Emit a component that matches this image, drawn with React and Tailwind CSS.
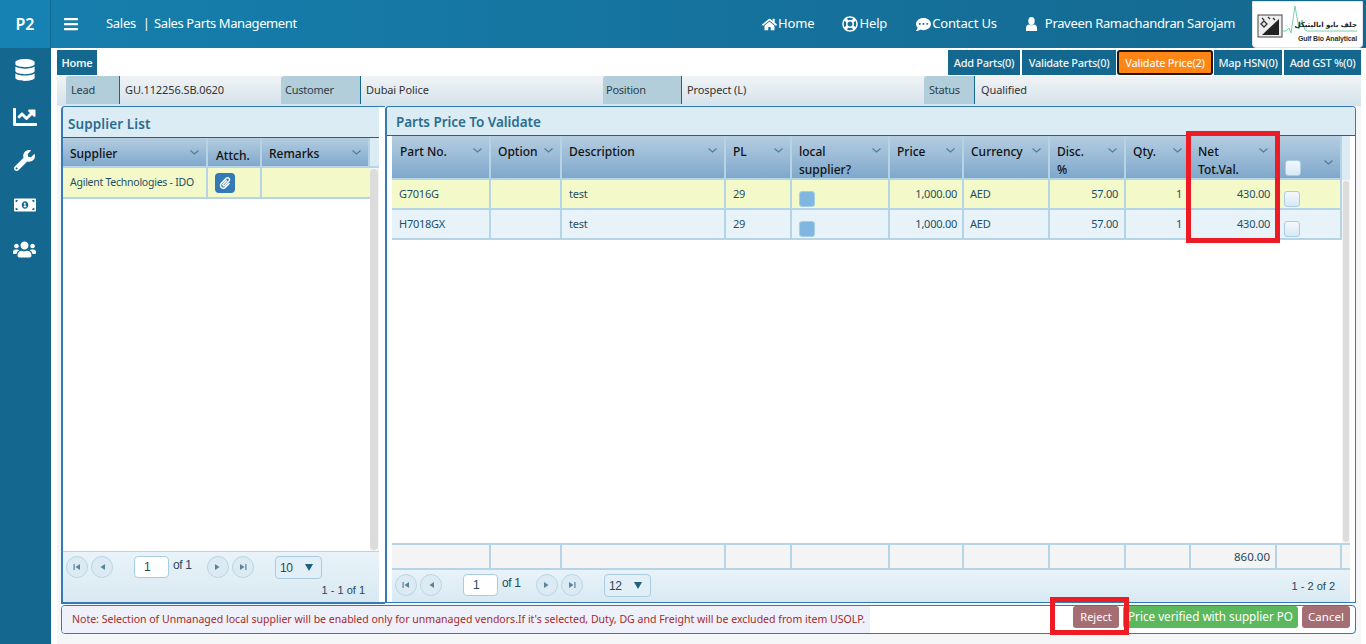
import React from "react";
import { FaDatabase, FaChartLine, FaWrench, FaMoneyBillAlt, FaUsers, FaHome, FaRegLifeRing, FaCommentDots, FaBars, FaPaperclip } from "react-icons/fa";

const Caret = ({ className = "" }) => (
  <svg width="9" height="5" viewBox="0 0 9 5" className={`shrink-0 ${className}`}>
    <path d="M0.5 0.5l4 3.5 4-3.5" fill="none" stroke="#4f7f9c" strokeWidth="1.2" />
  </svg>
);

const Head = ({ children, className = "" }) => (
  <div className={`flex h-full min-w-0 border-r-2 border-[#b5d5e6] pl-[7px] pr-[7px] pt-[7px] text-[12px] font-medium leading-[18px] text-[#111] ${className}`}>
    <div className="flex-1">{children}</div>
    <Caret className="mt-[5px]" />
  </div>
);

const Cell = ({ children, right, className = "" }) => (
  <div className={`flex h-full min-w-0 items-center whitespace-nowrap border-r-2 border-[#b5d5e6] px-[6px] text-[11px] tracking-[-0.25px] text-[#1f4f66] ${right ? "justify-end" : ""} ${className}`}>
    {children}
  </div>
);

const Box = ({ filled }) => (
  <span className={`ml-px mt-[10px] block h-[16px] w-[16px] rounded-[3px] border border-[#a9cde4] ${filled ? "bg-[#7fb7e0]" : "bg-gradient-to-b from-[#f4f8fc] to-[#d8e8f5]"}`} />
);

const cols = "grid-cols-[99px_71px_164px_66px_98px_74px_86px_76px_65px_86px_65px]";

const PRow = ({ bg, part }) => (
  <div className={`grid h-[30px] w-[950px] ${cols} border-b-2 border-[#b5d5e6] ${bg}`}>
    <Cell className="!pl-[7px]">{part}</Cell>
    <Cell />
    <Cell className="!pl-[7px]">test</Cell>
    <Cell className="!pl-[7px]">29</Cell>
    <Cell><Box filled /></Cell>
    <Cell right className="!pr-[5px]">1,000.00</Cell>
    <Cell>AED</Cell>
    <Cell right>57.00</Cell>
    <Cell right className="!pr-[7px]">1</Cell>
    <Cell right className="!pr-[5px]">430.00</Cell>
    <Cell><Box /></Cell>
  </div>
);

const PagerBtn = ({ bar, flip }) => (
  <span className="flex h-[22px] w-[22px] items-center justify-center rounded-full border border-[#b7d6e6] bg-[#dcebf3]">
    <svg width="8" height="8" viewBox="0 0 8 8" className={flip ? "rotate-180" : ""}>
      {bar && <rect x="0.5" y="1" width="1.2" height="6" fill="#5c8499" />}
      <path d="M7 1v6L2.5 4z" fill="#5c8499" />
    </svg>
  </span>
);

const Pager = ({ size }) => (
  <div className="flex items-start pl-[3px] pt-[4px] text-[11px] text-[#24485c] [font-family:'Liberation_Sans',sans-serif]">
    <div className="flex gap-[3px]"><PagerBtn bar /><PagerBtn /></div>
    <div className="ml-[21px] flex h-[22px] w-[35px] items-center rounded-[4px] border border-[#a9cde0] bg-white pl-[9px] text-[12px]">1</div>
    <span className="ml-[4px] mt-[0px] w-[18px] whitespace-nowrap text-[12px] tracking-[-0.4px]">of 1</span>
    <div className="ml-[16px] flex gap-[3px]"><PagerBtn flip /><PagerBtn bar flip /></div>
    <div className="ml-[21px] flex h-[23px] w-[47px] items-center justify-between rounded-[4px] border border-[#a9cde0] bg-[#e2eff6] pl-[4px] pr-[8px] text-[12px] tracking-[-0.5px]">
      {size}
      <svg width="8" height="7" viewBox="0 0 8 7"><path d="M0 0h8L4 7z" fill="#1f5f7f" /></svg>
    </div>
  </div>
);

const Logo = () => (
  <div className="h-[47px] w-[111px] rounded-b-[4px] border border-[#dfe5e8] bg-white">
    <svg width="109" height="45" viewBox="0 0 109 45">
      <rect x="5" y="13" width="24" height="22" fill="#eee" stroke="#444" strokeWidth="1" />
      <path d="M9 33L26 17v16z" fill="#222" />
      <path d="M8 22l3-3 3 3-3 3zM9 16l2 2M15 15l2 2M20 16l2 2" stroke="#333" strokeWidth="1.3" fill="none" />
      <path d="M29 29h4l3-3 2 5 4-27 4 23 3-9 3 10 2 1h50" stroke="#55c59a" strokeWidth="0.8" fill="none" />
      <text x="104" y="25" textAnchor="end" fontSize="7" fontWeight="700" fill="#222" fontFamily="'DejaVu Sans',sans-serif">جلف بايو اناليتيكل</text>
      <text x="104" y="39" textAnchor="end" fontSize="7" fontWeight="700" fill="#333" letterSpacing="-0.15" fontFamily="'Liberation Sans',sans-serif">Gulf Bio Analytical</text>
    </svg>
  </div>
);

const TopLink = ({ icon, children, className = "" }) => (
  <span className={`flex items-center gap-[1px] text-[13px] tracking-[-0.15px] text-white ${className}`}>{icon}{children}</span>
);

const Tab = ({ children, active, className = "" }) => (
  <div className={`flex h-[25px] items-center justify-center whitespace-nowrap pt-px text-[11px] font-medium tracking-[-0.3px] text-[#eef5f8] ${active ? "rounded-[3px] border-2 border-[#1a1a1a] bg-[#ff8515]" : "bg-[#14678f]"} ${className}`}>{children}</div>
);

const Label = ({ children, className = "" }) => (
  <div className={`flex h-full items-center rounded-tl-[3px] border-r border-[#14678f] bg-[#b3cedb] pl-[5px] text-[11px] tracking-[-0.25px] text-[#2a3f4b] ${className}`}>{children}</div>
);
const Value = ({ children, className = "" }) => (
  <div className={`flex h-full items-center pl-[5px] text-[11px] tracking-[-0.1px] text-[#333] ${className}`}>{children}</div>
);

export default function App() {
  return (
    <div className="relative flex h-[644px] w-[1366px] flex-col overflow-hidden bg-white [font-family:'Noto_Sans',sans-serif]">
      {/* top bar */}
      <header className="flex h-[48px] shrink-0 items-center bg-gradient-to-r from-[#167fae] to-[#14688f]">
        <div className="flex h-full w-[51px] items-center justify-center border-r border-[#14678f] bg-[#1681b3] text-[16px] font-semibold text-white">P2</div>
        <FaBars className="ml-[12px] text-[16px] text-white" />
        <span className="ml-[27px] text-[13px] tracking-[-0.3px] text-white">Sales</span>
        <span className="ml-[7px] text-[13px] text-white">|</span>
        <span className="ml-[4px] text-[13px] tracking-[-0.4px] text-white">Sales Parts Management</span>
        <div className="flex-1" />
        <TopLink icon={<FaHome className="text-[15px]" />}>Home</TopLink>
        <TopLink className="ml-[28px]" icon={<FaRegLifeRing className="text-[16px]" />}>Help</TopLink>
        <TopLink className="ml-[29px]" icon={<FaCommentDots className="text-[15px]" />}>Contact Us</TopLink>
        <svg width="11" height="14" viewBox="0 0 11 14" className="ml-[29px] shrink-0">
          <ellipse cx="5.5" cy="4" rx="3.2" ry="4" fill="#fff" />
          <path d="M0 14v-3c0-2 1.5-3.5 3-3.5 1 1 4 1 5 0 1.5 0 3 1.500 3 3.500v3z" fill="#fff" />
        </svg>
        <span className="ml-[8px] text-[13px] tracking-[-0.33px] text-white">Praveen Ramachandran Sarojam</span>
        <div className="ml-[17px] mr-[3px]"><Logo /></div>
      </header>

      <div className="flex min-h-0 flex-1">
        {/* sidebar */}
        <aside className="flex w-[51px] shrink-0 flex-col items-center bg-[#14678f] pr-[2px] pt-[11px] text-white">
          <FaDatabase className="text-[22px]" />
          <FaChartLine className="mt-[24px] text-[24px]" />
          <FaWrench className="mt-[21px] text-[21px]" />
          <FaMoneyBillAlt className="mt-[23px] text-[22px]" />
          <FaUsers className="mt-[22px] text-[23px]" />
        </aside>

        <main className="flex min-w-0 flex-1 flex-col pl-[6px] pr-[5px]">
          {/* tabs */}
          <div className="flex h-[28px] shrink-0 items-end justify-between pb-[1px]">
            <Tab className="w-[40px] font-semibold">Home</Tab>
            <div className="flex">
              <Tab className="w-[72px]">Add Parts(0)</Tab>
              <Tab className="ml-[2px] w-[94px]">Validate Parts(0)</Tab>
              <Tab active className="ml-[1px] w-[96px]">Validate Price(2)</Tab>
              <Tab className="ml-[1px] w-[68px]">Map HSN(0)</Tab>
              <Tab className="ml-[2px] w-[77px]">Add GST %(0)</Tab>
            </div>
          </div>

          {/* info bar */}
          <div className="flex h-[30px] shrink-0 items-stretch bg-gradient-to-b from-[#f0f3f5] to-[#d4e3ec] pb-[2px] pl-[9px]">
            <Label className="w-[54px]">Lead</Label>
            <Value className="w-[161px]">GU.112256.SB.0620</Value>
            <Label className="w-[80px] !pl-[4px]">Customer</Label>
            <Value className="w-[242px]">Dubai Police</Value>
            <Label className="w-[79px] !pl-[3px]">Position</Label>
            <Value className="w-[242px]">Prospect (L)</Value>
            <Label className="w-[51px]">Status</Label>
            <Value className="!pl-[6px]">Qualified</Value>
          </div>

          {/* panels */}
          <div className="flex h-[498px] shrink-0 items-start bg-[#f5f6f7] pl-[4px] pr-[5px]">
            {/* supplier */}
            <section className="flex h-[498px] w-[324px] shrink-0 flex-col overflow-hidden rounded-tl-[4px] border-b-2 border-l-2 border-t border-[#337ab7] bg-white pr-[6px]">
              <div className="flex h-[31px] shrink-0 items-center border-b border-[#14678f] bg-[#dbecf4] pl-[5px] pt-[4px] text-[13.5px] font-semibold tracking-[0.1px] text-[#2b6c8f]">Supplier List</div>
              <div className="grid h-[30px] shrink-0 grid-cols-[145px_54px_108px_1fr] border-b-2 border-[#b5d5e6] bg-gradient-to-b from-[#b5cde0] to-[#7fa8cc]">
                <Head>Supplier</Head>
                <div className="h-full border-r-2 border-[#b5d5e6] pl-[8px] pt-[9px] text-[12px] font-medium leading-[18px] text-[#111]">Attch.</div>
                <Head>Remarks</Head>
                <div className="bg-[#dbecf4]" />
              </div>
              <div className="flex min-h-0 flex-1">
                <div className="w-[307px]">
                  <div className="grid h-[31px] grid-cols-[145px_54px_1fr] border-b-2 border-[#b5d5e6] bg-[#f4f9c9]">
                    <Cell className="!pl-[7px] !text-[10.5px] !tracking-[-0.25px]">Agilent Technologies - IDO</Cell>
                    <Cell className="!pl-[7px]">
                      <span className="flex h-[20px] w-[20px] items-center justify-center rounded-[4px] bg-[#337ab7] text-white"><FaPaperclip className="text-[12px]" /></span>
                    </Cell>
                    <div />
                  </div>
                </div>
                <div className="w-[9px] shrink-0 bg-[#f5f5f5] py-px pl-0 pr-[1px]"><div className="h-full w-full rounded-full bg-[#dcdcdc]" /></div>
              </div>
              <div className="h-[51px] shrink-0 border-t border-[#b5d5e6] bg-gradient-to-b from-[#e9f3f9] to-[#d9e9f2]">
                <Pager size="10" />
                <div className="mt-[3px] pr-[14px] text-right text-[11px] text-[#24485c] [font-family:'Liberation_Sans',sans-serif]">1 - 1 of 1</div>
              </div>
            </section>

            {/* parts */}
            <section className="flex h-[497px] min-w-0 flex-1 flex-col overflow-hidden rounded-t-[4px] border border-l-2 border-[#337ab7] bg-white pl-[5px] pr-[5px]">
              <div className="-ml-[5px] -mr-[5px] flex h-[29px] shrink-0 items-center border-b border-[#14678f] bg-[#dbecf4] pl-[9px] pt-[2px] text-[13.5px] font-semibold tracking-[-0.05px] text-[#2b6c8f]">Parts Price To Validate</div>
              <div className="flex h-[44px] shrink-0">
                <div className={`grid w-[950px] ${cols} border-b-2 border-[#b5d5e6] bg-gradient-to-b from-[#b5cde0] to-[#7fa8cc]`}>
                  <Head className="!pl-[8px]">Part No.</Head>
                  <Head>Option</Head>
                  <Head>Description</Head>
                  <Head>PL</Head>
                  <Head>local<br />supplier?</Head>
                  <Head>Price</Head>
                  <Head>Currency</Head>
                  <Head>Disc.<br />%</Head>
                  <Head>Qty.</Head>
                  <Head>Net<br />Tot.Val.</Head>
                  <div className="flex items-start justify-between border-r-2 border-[#b5d5e6] pl-[7px] pr-[7px] pt-[14px]"><Box /><Caret className="mt-[10px]" /></div>
                </div>
                <div className="flex-1 bg-[#dbecf4]" />
              </div>
              <div className="flex min-h-0 flex-1">
                <div className="w-[950px]">
                  <PRow bg="bg-[#f4f9c9]" part="G7016G" />
                  <PRow bg="bg-[#e8f2f9]" part="H7018GX" />
                </div>
                <div className="flex-1 bg-[#f5f5f5] px-px py-px"><div className="h-full w-full rounded-full bg-[#dcdcdc]" /></div>
              </div>
              <div className="h-[27px] shrink-0 border-y-2 border-[#b5d5e6] bg-[#f4f4f4]">
                <div className={`grid h-full w-[950px] ${cols}`}>
                  <Cell /><Cell /><Cell /><Cell /><Cell /><Cell /><Cell /><Cell /><Cell />
                  <Cell right className="!pr-[5px] !text-[11.5px] !tracking-normal !text-[#24485c]">860.00</Cell>
                  <Cell />
                </div>
              </div>
              <div className="flex h-[32px] shrink-0 justify-between bg-gradient-to-b from-[#e9f3f9] to-[#d9e9f2]">
                <Pager size="12" />
                <div className="pr-[15px] pt-[8px] text-[11px] text-[#24485c] [font-family:'Liberation_Sans',sans-serif]">1 - 2 of 2</div>
              </div>
            </section>
          </div>

          {/* bottom */}
          <div className="flex h-[40px] shrink-0 bg-[#f5f6f7] pb-[10px] pl-[4px] pr-[5px] pt-[1px]">
            <div className="flex h-[29px] flex-1 overflow-hidden rounded-[4px] border border-[#337ab7] bg-white">
              <div className="flex h-full w-[808px] items-center bg-[#eef1fa] pl-[10px] text-[10.54px] text-[#a52a2a]">
                Note: Selection of Unmanaged local supplier will be enabled only for unmanaged vendors.If it's selected, Duty, DG and Freight will be excluded from item USOLP.
              </div>
              <div className="flex flex-1 items-start justify-end gap-[4px] pr-[5px]">
                <button className="flex h-[22px] w-[46px] items-center justify-center rounded-[3px] bg-[#a46e73] text-[11px] text-white">Reject</button>
                <button className="flex h-[22px] w-[175px] items-center justify-center whitespace-nowrap rounded-[3px] bg-[#5cb85c] text-[11.7px] text-white">Price verified with supplier PO</button>
                <button className="flex h-[22px] w-[48px] items-center justify-center rounded-[3px] bg-[#a46e73] text-[11.5px] text-white">Cancel</button>
              </div>
            </div>
          </div>
        </main>
      </div>

      {/* red annotation rectangles */}
      <div className="pointer-events-none absolute left-[1186px] top-[131px] h-[112px] w-[94px] border-[5px] border-[#ed1c24]" />
      <div className="pointer-events-none absolute left-[1050px] top-[597px] h-[38px] w-[79px] border-[5px] border-[#ed1c24]" />
    </div>
  );
}
